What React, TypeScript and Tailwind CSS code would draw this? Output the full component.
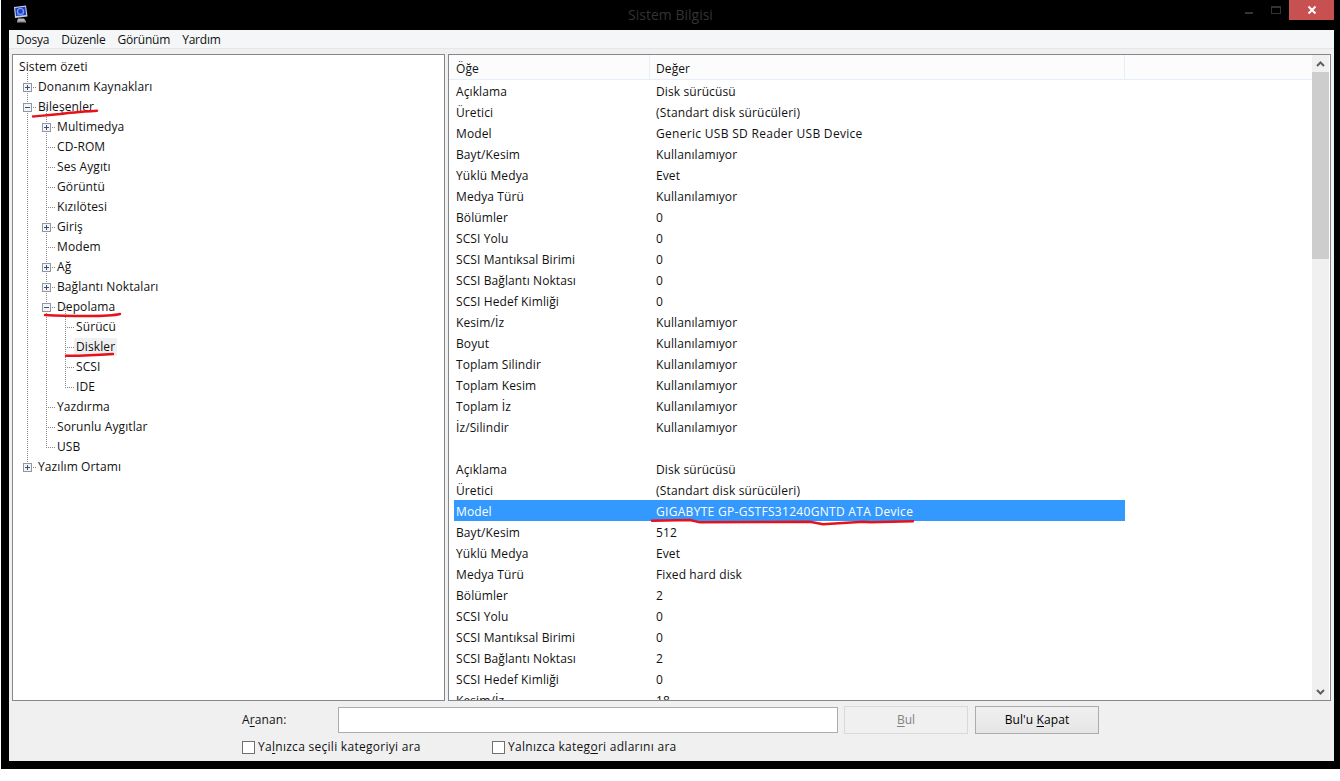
import React from "react";

const font = "[font-family:'Open_Sans','Noto_Sans',sans-serif]";

type TreeRow = { label: string; level: number; exp?: "+" | "-"; sel?: boolean };
const tree: TreeRow[] = [
  { label: "Sistem özeti", level: -1 },
  { label: "Donanım Kaynakları", level: 0, exp: "+" },
  { label: "Bileşenler", level: 0, exp: "-" },
  { label: "Multimedya", level: 1, exp: "+" },
  { label: "CD-ROM", level: 1 },
  { label: "Ses Aygıtı", level: 1 },
  { label: "Görüntü", level: 1 },
  { label: "Kızılötesi", level: 1 },
  { label: "Giriş", level: 1, exp: "+" },
  { label: "Modem", level: 1 },
  { label: "Ağ", level: 1, exp: "+" },
  { label: "Bağlantı Noktaları", level: 1, exp: "+" },
  { label: "Depolama", level: 1, exp: "-" },
  { label: "Sürücü", level: 2 },
  { label: "Diskler", level: 2, sel: true },
  { label: "SCSI", level: 2 },
  { label: "IDE", level: 2 },
  { label: "Yazdırma", level: 1 },
  { label: "Sorunlu Aygıtlar", level: 1 },
  { label: "USB", level: 1 },
  { label: "Yazılım Ortamı", level: 0, exp: "+" },
];

const K = "Kullanılamıyor";
const rows: [string, string][] = [
  ["Açıklama", "Disk sürücüsü"],
  ["Üretici", "(Standart disk sürücüleri)"],
  ["Model", "Generic USB SD Reader USB Device"],
  ["Bayt/Kesim", K],
  ["Yüklü Medya", "Evet"],
  ["Medya Türü", K],
  ["Bölümler", "0"],
  ["SCSI Yolu", "0"],
  ["SCSI Mantıksal Birimi", "0"],
  ["SCSI Bağlantı Noktası", "0"],
  ["SCSI Hedef Kimliği", "0"],
  ["Kesim/İz", K],
  ["Boyut", K],
  ["Toplam Silindir", K],
  ["Toplam Kesim", K],
  ["Toplam İz", K],
  ["İz/Silindir", K],
  ["", ""],
  ["Açıklama", "Disk sürücüsü"],
  ["Üretici", "(Standart disk sürücüleri)"],
  ["Model", "GIGABYTE GP-GSTFS31240GNTD ATA Device"],
  ["Bayt/Kesim", "512"],
  ["Yüklü Medya", "Evet"],
  ["Medya Türü", "Fixed hard disk"],
  ["Bölümler", "2"],
  ["SCSI Yolu", "0"],
  ["SCSI Mantıksal Birimi", "0"],
  ["SCSI Bağlantı Noktası", "2"],
  ["SCSI Hedef Kimliği", "0"],
  ["Kesim/İz", "18"],
];

function TreeLines() {
  const d = "1 1";
  const c = "#8a8a8a";
  const rowY = (i: number) => 12 + i * 20;
  const hs: [number, number, number][] = [];
  tree.forEach((t, i) => {
    if (t.level < 0) return;
    const x = 14 + t.level * 19;
    hs.push([x, x + 9, rowY(i)]);
  });
  const boxes = tree.map((t, i) => ({ t, i })).filter((v) => v.t.exp);
  return (
    <svg className="absolute left-0 top-0 pointer-events-none" width="120" height="440" shapeRendering="crispEdges">
      <line x1="14.5" x2="14.5" y1="18" y2={rowY(20)} stroke={c} strokeDasharray={d} />
      <line x1="33.5" x2="33.5" y1={rowY(2)} y2={rowY(19)} stroke={c} strokeDasharray={d} />
      <line x1="52.5" x2="52.5" y1={rowY(12)} y2={rowY(16)} stroke={c} strokeDasharray={d} />
      {hs.map(([a, b, y], i) => (
        <line key={i} x1={a} x2={b} y1={y + 0.5} y2={y + 0.5} stroke={c} strokeDasharray={d} />
      ))}
      {boxes.map(({ t, i }) => {
        const cx = 14 + t.level * 19;
        const y = rowY(i);
        return (
          <g key={i}>
            <rect x={cx - 4 + 0.5} y={y - 4 + 0.5} width="8" height="8" fill="#f4f4f4" stroke="#8f97a3" />
            <line x1={cx - 2} x2={cx + 3} y1={y + 0.5} y2={y + 0.5} stroke="#3c4f7c" />
            {t.exp === "+" && <line x1={cx + 0.5} x2={cx + 0.5} y1={y - 2} y2={y + 3} stroke="#3c4f7c" />}
          </g>
        );
      })}
    </svg>
  );
}

function Red({ d, x, y, w, h }: { d: string; x: number; y: number; w: number; h: number }) {
  return (
    <svg className="absolute pointer-events-none" style={{ left: x, top: y }} width={w} height={h}>
      <path d={d} fill="none" stroke="#e8111a" strokeWidth="2.4" strokeLinecap="round" />
    </svg>
  );
}

const treePad = ["pl-[6px]", "pl-[25px]", "pl-[44px]", "pl-[63px]"];

function U({ c }: { c: string }) {
  return <span className="underline underline-offset-2">{c}</span>;
}

export default function App() {
  return (
    <div className={`w-[1340px] h-[781px] overflow-hidden bg-white text-[12px] leading-[16px] text-[#111111] ${font} relative`}>
      <div className="h-[769px] bg-black ml-[1px] flex flex-col">
        {/* Title bar */}
        <div className="h-[30px] flex items-start relative shrink-0">
          <svg className="ml-[11px] mt-[5px]" width="17" height="18" viewBox="0 0 17 18">
            <path d="M2 2l12-1.5 1.5 11L3 13z" fill="#c4cfe4" />
            <path d="M3.2 3l10-1.2 1 8.2L4 11z" fill="#1e3fc4" />
            <circle cx="8.5" cy="6.5" r="3" fill="none" stroke="#86a9f5" strokeWidth="1.2" />
            <path d="M5 9.5l7-1" stroke="#5f86ea" strokeWidth="1" />
            <path d="M6 13.5h6l2 3H5z" fill="#b4b4b4" />
            <rect x="5" y="16" width="9" height="1.5" fill="#8f8f8f" />
          </svg>
          <div className="absolute left-0 right-0 top-[6px] text-center text-[14px] leading-[18px] text-[#333333]">Sistem Bilgisi</div>
          <div className="ml-auto flex items-start h-[20px] mr-[6px]">
            <div className="w-[8px] h-[2px] bg-[#333333] mt-[12px] mr-[18px]" />
            <div className="w-[10px] h-[8px] border border-[#333333] border-t-[2px] mt-[6px] mr-[8px]" />
            <div className="w-[45px] h-[20px] bg-[#c75050] flex items-center justify-center">
              <svg width="10" height="10" viewBox="0 0 10 10">
                <path d="M1.5 1.5l7 7M8.5 1.5l-7 7" stroke="#fff" strokeWidth="2" />
              </svg>
            </div>
          </div>
        </div>

        {/* Client */}
        <div className="flex-1 min-h-0 ml-[8px] mr-[6px] mb-[8px] bg-[#f0f0f0] flex flex-col">
          {/* Menu */}
          <div className="h-[19px] bg-[#f5f6f7] border-b border-[#e6e6e6] flex items-center gap-[12px] pl-[7px] pt-[2px] shrink-0 tracking-[-0.2px]">
            {["Dosya", "Düzenle", "Görünüm", "Yardım"].map((m) => (
              <span key={m}>{m}</span>
            ))}
          </div>

          {/* Panes */}
          <div className="flex gap-[3px] pl-[3px] pr-[3px] mt-[5px] h-[647px] shrink-0">
            <div className="relative w-[433px] bg-white border border-[#828790] pt-[2px] overflow-hidden tracking-[0.1px]">
              <TreeLines />
              {tree.map((t) => (
                <div key={t.label} className={`h-[20px] flex items-center ${treePad[t.level + 1]}`}>
                  <span className={t.sel ? "bg-[#f0f0f0] px-[2px] -ml-[2px] leading-[18px]" : ""}>{t.label}</span>
                </div>
              ))}
            </div>

            <div className="relative flex-1 bg-white border border-[#828790] flex overflow-hidden tracking-[0.1px]">
              <div className="flex-1 overflow-hidden">
                <div className="h-[25px] bg-[#fcfcfc] border-b border-[#e5effb] flex items-center w-[863px]">
                  <div className="w-[201px] h-full pl-[7px] pt-[3px] flex items-center border-r border-[#e5effb]">Öğe</div>
                  <div className="w-[475px] h-full pl-[6px] pt-[3px] flex items-center border-r border-[#e5effb]">Değer</div>
                </div>
                {rows.map(([a, b], i) => (
                  <div
                    key={i}
                    className={`h-[21px] pt-[2px] flex items-center ml-[5px] w-[671px] ${i === 20 ? "bg-[#3399ff] text-white" : ""}`}
                  >
                    <div className="w-[197px] pl-[2px] shrink-0">{a}</div>
                    <div
                      className={`pl-[5px] whitespace-nowrap ${
                        i === 2 || i === 20 ? "tracking-[0.3px]" : i === 1 || i === 19 ? "tracking-[0.16px]" : ""
                      }`}
                    >
                      {b}
                    </div>
                  </div>
                ))}
              </div>
              <div className="w-[17px] bg-[#f0f0f0] flex flex-col shrink-0 mr-[1px]">
                <div className="h-[17px] flex items-center justify-center shrink-0">
                  <svg width="9" height="6" viewBox="0 0 9 6"><path d="M1 5l3.5-3.5L8 5" stroke="#606060" strokeWidth="2" fill="none" /></svg>
                </div>
                <div className="h-[187px] bg-[#cdcdcd] shrink-0" />
                <div className="flex-1" />
                <div className="h-[17px] flex items-center justify-center shrink-0">
                  <svg width="9" height="6" viewBox="0 0 9 6"><path d="M1 1l3.5 3.5L8 1" stroke="#606060" strokeWidth="2" fill="none" /></svg>
                </div>
              </div>
            </div>
          </div>

          {/* Find bar */}
          <div className="flex-1 pl-[233px] pt-[5px] flex flex-col gap-[7px]">
            <div className="flex items-center h-[27px]">
              <div className="w-[96px] tracking-[0.1px]">A<U c="r" />anan:</div>
              <div className="w-[500px] h-[26px] bg-white border border-[#abadb3]" />
              <button className="ml-[6px] w-[124px] h-[28px] bg-[#f0f0f0] border border-[#d9d9d9] text-[#838383]"><U c="B" />ul</button>
              <button className="ml-[7px] w-[124px] h-[28px] bg-gradient-to-b from-[#f0f0f0] to-[#e5e5e5] border border-[#acacac] text-black tracking-[0.1px]">
                Bul'u <U c="K" />apat
              </button>
            </div>
            <div className="flex items-center h-[14px]">
              <span className="w-[13px] h-[13px] bg-white border border-[#707070] mr-[3px]" />
              <span className="w-[234px] tracking-[0.28px]">Ya<U c="l" />nızca seçili kategoriyi ara</span>
              <span className="w-[13px] h-[13px] bg-white border border-[#707070] mr-[3px]" />
              <span className="tracking-[0.28px]">Yalnızca kateg<U c="o" />ri adlarını ara</span>
            </div>
          </div>
        </div>
      </div>

      {/* Red hand-drawn marks */}
      <Red x={30} y={106} w={72} h={14} d="M3 10.5C10 10 17 9 30 8C40 6.5 47 6 67 4.7" />
      <Red x={42} y={308} w={82} h={12} d="M3 7C20 8 30 8 45 8C60 8 70 8 78 6" />
      <Red x={63} y={350} w={56} h={9} d="M3 5.7C20 6 35 5 50 4" />
      <Red x={650} y={516} w={270} h={11} d="M2 4.7L40 4L50 6.3L160 5.7L173 8.3L213 5.7L220 6.3L263 5.3" />
    </div>
  );
}
